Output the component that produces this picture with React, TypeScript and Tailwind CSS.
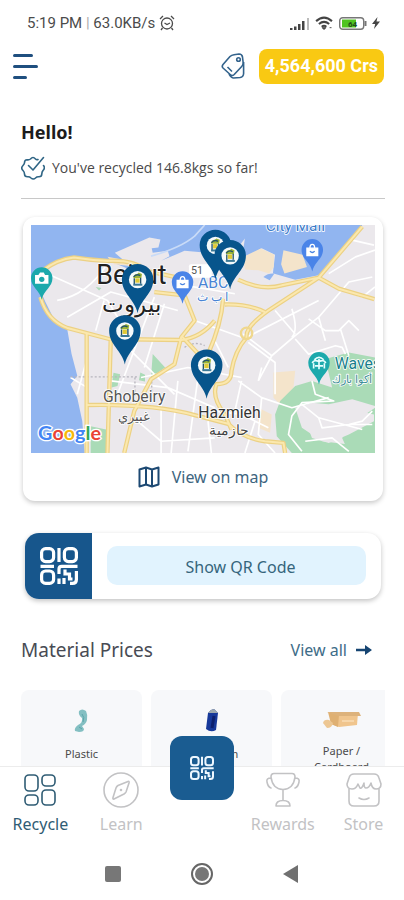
import type { ReactNode } from "react";

const uiFont = "font-['Noto_Sans','Open_Sans',sans-serif]";

function QrIcon({ className }: { className: string }) {
  return (
    <svg viewBox="0 0 38 38" className={className} fill="none" stroke="currentColor" strokeWidth="3.2" aria-hidden="true">
      <rect x="1.6" y="1.6" width="12" height="13" rx="4" />
      <rect x="24.4" y="1.6" width="12" height="13" rx="4" />
      <rect x="1.6" y="24" width="12" height="12.4" rx="4" />
      <path d="M19 1v14M0.500 19.300h13.500M19 27v-5q0-2.700 2.700-2.700H37.500M19 31.500V37M25 22.500v4.500h4.500v5h3M36.400 24v8.400q0 4-4 4H30M24 31v6" />
    </svg>
  );
}

function Pin({ x, y }: { x: number; y: number }) {
  return (
    <g transform={`translate(${x} ${y})`}>
      <path d="M0 100C-9 58-47 42-47-1a47 46 0 0 1 94 0C47 42 9 58 0 100Z" fill="#07558c" />
      <circle r="26" fill="#f5fafb" />
      <path d="M-13-6q2-12 12-11l4-4 10 4-2 12h-22Z" fill="#9db536" />
      <path d="M-12-8q8-11 20-4M-10-4v18M9-6v18" fill="none" stroke="#24536b" strokeWidth="4" />
      <path d="M-7-4H6V9H-7Z" fill="#e0c936" />
      <path d="M-13 15H14" stroke="#3b7896" strokeWidth="6" />
    </g>
  );
}

function Poi({ x, y, color, children }: { x: number; y: number; color: string; children: ReactNode }) {
  return (
    <g transform={`translate(${x} ${y})`}>
      <path d="M0 64C-6 34-32 27-32-1a32 32 0 0 1 64 0C32 27 6 34 0 64Z" fill={color} />
      {children}
    </g>
  );
}

function Bag() {
  return (
    <g fill="none" stroke="#fff" strokeWidth="4">
      <path d="M-16-6H16V16H-16Z" fill="#fff" />
      <path d="M-7-6q0-11 7-11t7 11" />
      <path d="M-7 3q7 8 14 0" stroke="#4a84e0" />
    </g>
  );
}

const mainRoads =
  "M48 150Q90 118 140 112Q190 120 240 122Q320 118 350 150L440 170M40 230Q60 300 120 322Q180 338 245 355L460 358Q520 350 560 300M178 338V695M250 350L240 695M178 552Q380 548 500 582L600 608Q640 650 710 660L765 665L770 695M380 215L470 225L500 300L460 350L440 430L370 475L320 570L290 695M460 345L530 420M585 235Q580 310 540 400M630 178Q700 212 760 195L870 172L1000 20M870 172L930 205L1036 236M870 172L720 270Q650 320 655 350Q620 390 610 450Q610 490 565 490Q550 530 590 580L610 625M590 252Q660 250 710 275";

function CityMap() {
  return (
    <svg
      viewBox="12 15 1026 680"
      className="block w-full"
      role="img"
      aria-label="Map of Beirut with recycling points"
      fontFamily="Roboto, 'Noto Sans', sans-serif"
    >
      <rect x="12" y="15" width="1026" height="680" fill="#ebe8ec" />
      <path
        d="M12 15H1000L965 62L870 165L800 178L720 155L640 150L560 135L520 105L470 125L430 120L385 140L300 145L240 120L140 108L70 135L35 200L55 245L85 305L120 325L133 400L150 465L130 490L150 530L165 600L172 695H12Z"
        fill="#91b5f0"
      />
      <path d="M262 98L365 52L398 58L392 82L372 84L375 98L420 92L425 108L400 122L470 92L520 96L600 120L650 55L640 120L700 84L740 104L732 172L640 180L420 170L330 155Z" fill="#ebe8ec" />
      <path d="M645 110L697 85L737 103L736 140L722 160L690 150L650 148ZM765 90L822 104L835 140L768 160L758 132ZM240 110L340 128L345 142L260 132Z" fill="#f4e4cb" />
      <path d="M735 455L800 450L795 500L755 550L735 530ZM690 560L730 580L725 635L690 620Z" fill="#f4e4cb" />
      <path d="M705 170Q720 158 738 160L724 180Z" fill="#91b5f0" />
      <path
        d="M890 415L960 395L1038 410V555L970 535L900 550L850 545L800 560L820 620L880 660L960 670L975 695H790L745 645L740 580L755 540L800 495L850 480L910 500ZM1038 560V695H960L940 650L965 610ZM375 400L412 440L370 470ZM258 456L278 460L270 495L252 500ZM338 455L352 462V482L334 478ZM190 615L236 625V695H190ZM205 200L222 203L215 210Z"
        fill="#aadbb7"
      />
      <path d="M815 555L900 575L970 565L1035 580V600L960 640L900 665L850 650Z" fill="#ebe8ec" />
      <g fill="none" stroke="#fff" strokeWidth="5" strokeLinejoin="round">
        <path d="M370 108Q460 82 500 48L530 15" stroke="#c9dbf7" />
        <path d="M70 165L240 240L300 340M90 240Q180 225 240 130M120 290L250 215L450 270M230 240L205 330M380 230L300 440L270 520M410 250L350 440M300 380L440 520M340 470L480 440L640 470M400 540V695M450 480L430 695M250 480L420 500L560 560M510 470L480 690M540 600L550 695M330 600L400 660L560 650M130 470L180 500M180 410L150 520M500 300L640 350M560 360L600 440" />
        <path d="M645 340L730 405L690 480M730 405L800 345L870 290L960 185L1030 170M740 270L800 340M660 365L740 425L740 520M630 480L700 530L790 560L900 530M690 480L700 440M655 350L870 240M790 265Q810 330 790 350M840 295L890 330L930 330L960 300L990 330M800 355L840 400L920 375L940 380L950 400M870 290L890 360M935 325L960 405M900 160L980 110L1038 90M930 205L1000 230L1038 200M970 60L1035 75M440 190L620 220M620 560L680 600L650 695M640 480L620 570L720 620M700 530L690 640L740 695M560 570L640 580" />
        <path d="M850 480L860 520L915 540L820 545L790 585L780 640L820 690M820 550L870 590L880 620L960 610L1030 610M870 590L1000 625M830 660L910 650L960 690M1030 570L1000 600L960 610" />
      </g>
      <path d="M130 468H330M322 470V525M372 470V520M470 380Q500 360 530 375" fill="none" stroke="#b7b5bd" strokeWidth="4" strokeDasharray="6 6" />
      <path d={mainRoads} fill="none" stroke="#ecd184" strokeWidth="13" strokeLinejoin="round" />
      <path d={mainRoads} fill="none" stroke="#fbe8ae" strokeWidth="6" strokeLinejoin="round" />
      <circle cx="655" cy="338" r="17" fill="none" stroke="#efd78d" strokeWidth="7" />

      <g stroke="#fff" strokeWidth="5" paintOrder="stroke" strokeLinejoin="round">
        <text x="207" y="190" fontSize="80" fill="#222">Beirut</text>
        <text x="312" y="274" fontSize="68" fill="#222" textAnchor="middle">بيروت</text>
        <text x="227" y="543" fontSize="47" fill="#555">Ghobeiry</text>
        <text x="320" y="600" fontSize="38" fill="#555" textAnchor="middle">غبيري</text>
        <text x="511" y="591" fontSize="47" fill="#333">Hazmieh</text>
        <text x="602" y="640" fontSize="42" fill="#444" textAnchor="middle">حازمية</text>
        <text x="712" y="34" fontSize="46" fill="#3e7dca">City Mall</text>
        <text x="510" y="202" fontSize="47" fill="#4a84d4">ABC</text>
        <text x="554" y="242" fontSize="36" fill="#4a84d4" textAnchor="middle">ا ب ث</text>
        <text x="918" y="444" fontSize="47" fill="#177e8b">Waves</text>
        <text x="970" y="485" fontSize="32" fill="#3e8e97" textAnchor="middle">أكوا بارك</text>
      </g>
      <rect x="483" y="132" width="68" height="40" rx="6" fill="#fff" />
      <text x="489" y="162" fontSize="32" fill="#555">51</text>

      <Poi x={44} y={174} color="#1ba9ac">
        <path d="M-20-10H-10L-5-17H6L10-10H20V16H-20Z" fill="#fff" />
        <circle cy="3" r="8" fill="#1ba9ac" />
      </Poi>
      <Poi x={464} y={186} color="#4a84e8"><Bag /></Poi>
      <Poi x={851} y={90} color="#4a84e8"><Bag /></Poi>
      <Poi x={871} y={427} color="#1ba9ac">
        <path d="M-16 16V0M0 18V-12M16 16V0M-20 0q4-12 20-5q16-7 20 5M-14-10q14-14 28 0M-12 8H12" fill="none" stroke="#e6ffff" strokeWidth="5" />
      </Poi>
      <Pin x={562} y={76} />
      <Pin x={606} y={107} />
      <Pin x={330} y={178} />
      <Pin x={292} y={331} />
      <Pin x={536} y={433} />

      <g fontFamily="Lato, sans-serif" fontSize="59" fontWeight="700" stroke="#fff" strokeWidth="8" paintOrder="stroke">
        <text x="33" y="655">
          <tspan fill="#4285f4">G</tspan><tspan fill="#ea4335">o</tspan><tspan fill="#f6b90c">o</tspan>
          <tspan fill="#4285f4">g</tspan><tspan fill="#34a853">l</tspan><tspan fill="#ea4335">e</tspan>
        </text>
      </g>
    </svg>
  );
}

function StatusBar() {
  return (
    <div className="flex h-11 shrink-0 items-center justify-between pt-[2px] pr-6 pl-[27px] font-[Roboto,sans-serif] text-[15px] leading-5 text-[#4b4b4b]">
      <div className="flex items-center gap-1">
        <span>5:19 PM <span className="text-[#aaa]">|</span> 63.0KB/s</span>
        <svg viewBox="0 0 16 16" className="size-4" fill="none" stroke="#4b4b4b" strokeWidth="1.3" aria-hidden="true">
          <circle cx="8" cy="8.500" r="5.500" />
          <path d="M1 4l3-3M15 4l-3-3M3.500 13L2 15M12.500 13l1.500 2M5.500 8L8 9.500L11 8" />
        </svg>
      </div>
      <div className="flex items-center gap-[5px]">
        <svg viewBox="0 0 20 13" className="h-[13px] w-5" fill="#444" aria-hidden="true">
          <path d="M0 11h2.500v2H0zM4 9.500h2.500V13H4zM8 7h2.500v6H8zM12 4h2.500v9H12z" />
          <path d="M17 1h2v12h-2z" fill="#bbb" />
        </svg>
        <svg viewBox="0 0 20 15" className="h-[14px] w-[19px]" fill="none" stroke="#444" strokeWidth="2.200" aria-hidden="true">
          <path d="M1 5.500Q9.500-2 18 5.500M4 8.500q5.500-4.500 11 0M7 11.500q2.500-2 5 0" />
          <path d="M9.500 14.500l-2-2h4zM15.500 12.500h2" fill="#444" strokeWidth="1" />
        </svg>
        <svg viewBox="0 0 28 13" className="h-[13px] w-7" aria-hidden="true">
          <rect x=".7" y=".7" width="24" height="11.600" rx="3" fill="#fff" stroke="#777" strokeWidth="1.400" />
          <path d="M3 2.500h14v8H3z" fill="#4ec421" />
          <path d="M25.500 4h2v5h-2z" fill="#777" />
          <text x="9" y="10" fontSize="8" fontWeight="700" fill="#244c1c">64</text>
        </svg>
        <svg viewBox="0 0 8 12" className="h-3 w-2" fill="#444" aria-hidden="true">
          <path d="M5.500 0L0 7h3.200L2 12l6-7.500H4.500z" />
        </svg>
      </div>
    </div>
  );
}

function Header() {
  return (
    <header className="flex h-11 shrink-0 items-center justify-between pr-5 pl-[13px]">
      <button type="button" aria-label="Menu" className="flex flex-col gap-2 text-[#1f4f7f]">
        <span className="h-[3px] w-5 rounded bg-[#1f4f7f]" />
        <span className="h-[3px] w-[25px] rounded bg-[#1f4f7f]" />
        <span className="h-[3px] w-[14px] rounded bg-[#1f4f7f]" />
      </button>
      <div className="flex items-center gap-[14px]">
        <svg viewBox="0 0 24 26" className="h-[26px] w-6" fill="none" stroke="#33638c" strokeWidth="1.600" strokeLinejoin="round" aria-hidden="true">
          <path d="M9 3.500Q10.500 2 13 1.700L18 1q3 0 3.500 3l.7 6q0 2-1.500 3.500l-7.500 8q-2 2-4 0L2 15Q.5 13.500 2 11.500Z" />
          <path d="M22.600 9v11.500Q22.500 24 19 24.500l-6.500.5q-2 0-4.500-4M6.500 14l4.500 4.500" />
          <circle cx="17.500" cy="6.500" r="1.800" />
        </svg>
        <button type="button" className="h-[35px] rounded-lg bg-[#f9c913] px-[6px] font-[Roboto,sans-serif] text-lg font-bold whitespace-nowrap text-white">
          4,564,600 Crs
        </button>
      </div>
    </header>
  );
}

function Greeting() {
  return (
    <section className="border-b border-[#c8c8c8] pt-8 pb-[18px]">
      <h1 className="text-lg leading-6 font-bold text-[#1c1c1c]">Hello!</h1>
      <p className="mt-3 flex items-center gap-[7px] font-['Open_Sans','Noto_Sans',sans-serif] text-sm leading-6 text-[#4a4a4a]">
        <svg viewBox="0 0 24 24" className="size-6" fill="none" stroke="#2f6585" strokeWidth="1.600" strokeLinecap="round" strokeLinejoin="round" aria-hidden="true">
          <path d="M17 3.500Q15.500 4 14.500 3q-2.500-3-5 0Q8 4.200 6 3.800q-2.500 0-2.500 3Q3.500 8 2 9.500q-2.500 2.500 0 5Q3.500 16 3.500 18q0 2.800 3 2.800Q8.500 20.500 10 22q2.300 2 4.500 0q1.500-1.500 3.500-1.200q2.800 0 2.800-2.800q0-2 1.200-3.500q2.500-2.500.5-5" />
          <path d="M7.500 9.500L12 14L22.500 1.500" />
        </svg>
        You've recycled 146.8kgs so far!
      </p>
    </section>
  );
}

function MapCard() {
  return (
    <section className="mx-[2px] mt-[18px] rounded-xl bg-white p-2 pb-0 shadow-[0_2px_5px_rgba(0,0,0,0.22)]">
      <CityMap />
      <button type="button" className="flex h-12 w-full items-center justify-center gap-3 text-base text-[#3d6580]">
        <svg viewBox="0 0 22 22" className="size-[22px]" fill="none" stroke="#1d4973" strokeWidth="2" strokeLinejoin="round" aria-hidden="true">
          <path d="M1.500 3.500L8 1.500L14 3.500L20.500 1.500V18.500L14 20.500L8 18.500L1.500 20.500ZM8 1.500V18.500M14 3.500V20.500" />
        </svg>
        View on map
      </button>
    </section>
  );
}

function QrCard() {
  return (
    <section className="mx-1 mt-8 flex h-[66px] overflow-hidden rounded-[14px] bg-white shadow-[0_2px_5px_rgba(0,0,0,0.24)]">
      <div className="flex w-[67px] shrink-0 items-center justify-center bg-[#17568c] text-white">
        <QrIcon className="size-[38px]" />
      </div>
      <div className="flex flex-1 items-center px-[15px]">
        <button type="button" className="h-[39px] w-full rounded-[10px] bg-[#e1f3fe] pt-[2px] pl-2 text-base text-[#35657c]">
          Show QR Code
        </button>
      </div>
    </section>
  );
}

function MaterialCard({ name, picture }: { name: string; picture: ReactNode }) {
  return (
    <li className="flex h-[120px] w-[121px] shrink-0 flex-col items-center rounded-lg bg-[#f7f8fa] px-6 pt-[18px]">
      {picture}
      <span className="mt-3 text-center text-[11px] leading-4 text-[#4b4b4b]">{name}</span>
    </li>
  );
}

function Materials() {
  return (
    <section className="mt-9">
      <div className="flex h-[30px] items-center justify-between pr-[13px]">
        <h2 className="text-[19px] text-[#484b54]">Material Prices</h2>
        <a href="#materials" className="flex items-center gap-[9px] text-base text-[#3d6c88]">
          View all
          <svg viewBox="0 0 16 12" className="h-3 w-4" fill="#164572" aria-hidden="true">
            <path d="M0 4.800h9V1l7 5-7 5V7.200H0z" />
          </svg>
        </a>
      </div>
      <ul id="materials" className="mt-[25px] flex gap-[9px] overflow-hidden">
        <MaterialCard
          name="Plastic"
          picture={
            <svg viewBox="0 0 16 26" className="h-[26px] w-4" aria-hidden="true">
              <path d="M5 3Q8 0 12 3Q14 7 13 12Q12 16 8 18L10 21Q10 24 5 24L1 23Q0 20 4 17Q9 15 8 10Q4 7 5 3Z" fill="#83bfc2" />
              <path d="M8 6q3 3 1 8M5 19l3 2" stroke="#5ba5aa" fill="none" />
            </svg>
          }
        />
        <MaterialCard
          name="Aluminum"
          picture={
            <svg viewBox="0 0 16 26" className="h-[26px] w-4" aria-hidden="true">
              <path d="M4 5L7 2L10 1L14 5L12 22Q7 25 2 21Z" fill="#17399a" />
              <path d="M4 5L7 2L10 1L14 5Z" fill="#9da9ae" />
              <path d="M10 8L8 20" stroke="#0c206e" strokeWidth="3" />
            </svg>
          }
        />
        <MaterialCard
          name="Paper / Cardboard"
          picture={
            <svg viewBox="0 0 40 23" className="h-[23px] w-10" aria-hidden="true">
              <path d="M8 4L36 5L35 17L17 19L9 16Z" fill="#f0c58d" />
              <path d="M6 4L17 7L16 19L9 16Z" fill="#dfb072" />
              <path d="M5 4L37 4L39 8L17 8Z" fill="#ddb27b" />
              <path d="M1 15q1-4 6-3l4 3q-1 5-6 5z" fill="#edc793" />
              <path d="M20 13h12" stroke="#f7d7ab" strokeWidth="2" />
            </svg>
          }
        />
      </ul>
    </section>
  );
}

function Tab({ label, active, children }: { label: string; active?: boolean; children: ReactNode }) {
  return (
    <button
      type="button"
      aria-current={active ? "page" : undefined}
      className={
        active
          ? "flex flex-col items-center gap-1 pt-[5px] text-base leading-6 text-[#2f5c74]"
          : "flex flex-col items-center gap-1 pt-[5px] text-base leading-6 text-[#c2c2c4]"
      }
    >
      <svg viewBox="0 0 36 36" className="size-9" fill="none" stroke="currentColor" strokeWidth="1.600" strokeLinejoin="round" strokeLinecap="round" aria-hidden="true">
        {children}
      </svg>
      {label}
    </button>
  );
}

function TabBar() {
  return (
    <nav className="grid h-[74px] shrink-0 grid-cols-5 items-start border-t border-[#ececec] bg-white">
      <Tab label="Recycle" active>
        <rect x="3" y="3" width="13" height="16" rx="4" />
        <rect x="20" y="3" width="13" height="11" rx="4" />
        <rect x="3" y="23" width="13" height="10" rx="4" />
        <rect x="20" y="18" width="13" height="15" rx="4" />
      </Tab>
      <Tab label="Learn">
        <circle cx="18" cy="18" r="17" />
        <path d="M25 9.500Q26.500 9 26 11L23 20Q22.500 21 21 22L11 27Q9.500 27.500 10 25.500L13 16Q13.500 14.500 15 13.500Z" />
        <circle cx="18" cy="18" r=".5" />
      </Tab>
      <button type="button" aria-label="Scan QR code" className="-mt-[31px] flex size-16 items-center justify-center justify-self-center rounded-xl bg-[#1a5c91] text-[#edf7ff]">
        <QrIcon className="size-6" />
      </button>
      <Tab label="Rewards">
        <path d="M9 1.500H27Q30 1.500 30 5Q28.500 17 18 17.500Q7.500 17 6 5Q6 1.500 9 1.500ZM6 6Q1 6 2 10Q3 15 6 16M30 6Q35 6 34 10Q33 15 30 16M18 17.500V28M11 34Q11 28.500 18 28.500T25 34Z" />
      </Tab>
      <Tab label="Store">
        <path d="M8 2H28Q32 2 33 6L35 12Q35 17 30 17Q26 17 25 11Q23 16 20 16Q18 16 18 11Q16 17 14 16L12 12Q10 17 6 17Q1 17 1 12L3 6Q4 2 8 2Z" />
        <path d="M3 17V29Q3 34 8 34H28Q33 34 33 29V17M13 26Q18 29 23 26" />
      </Tab>
    </nav>
  );
}

function SystemNav() {
  return (
    <div className="flex h-[60px] shrink-0 items-center justify-center gap-[70px] bg-white pt-2">
      <button type="button" aria-label="Recent apps" className="size-4 rounded-[2px] bg-[#777]" />
      <button type="button" aria-label="Home" className="flex size-[22px] items-center justify-center rounded-full border-2 border-[#666]">
        <span className="size-[14px] rounded-full bg-[#777]" />
      </button>
      <button type="button" aria-label="Back">
        <svg viewBox="0 0 16 18" className="h-[18px] w-4" fill="#707070" aria-hidden="true">
          <path d="M15 0V18L0 9Z" />
        </svg>
      </button>
    </div>
  );
}

export default function App() {
  return (
    <div className={`${uiFont} flex h-screen flex-col overflow-hidden bg-white`}>
      <StatusBar />
      <Header />
      <main className="min-h-0 flex-1 overflow-y-auto pr-[19px] pl-[21px] [scrollbar-width:none]">
        <Greeting />
        <MapCard />
        <QrCard />
        <Materials />
      </main>
      <TabBar />
      <SystemNav />
    </div>
  );
}
